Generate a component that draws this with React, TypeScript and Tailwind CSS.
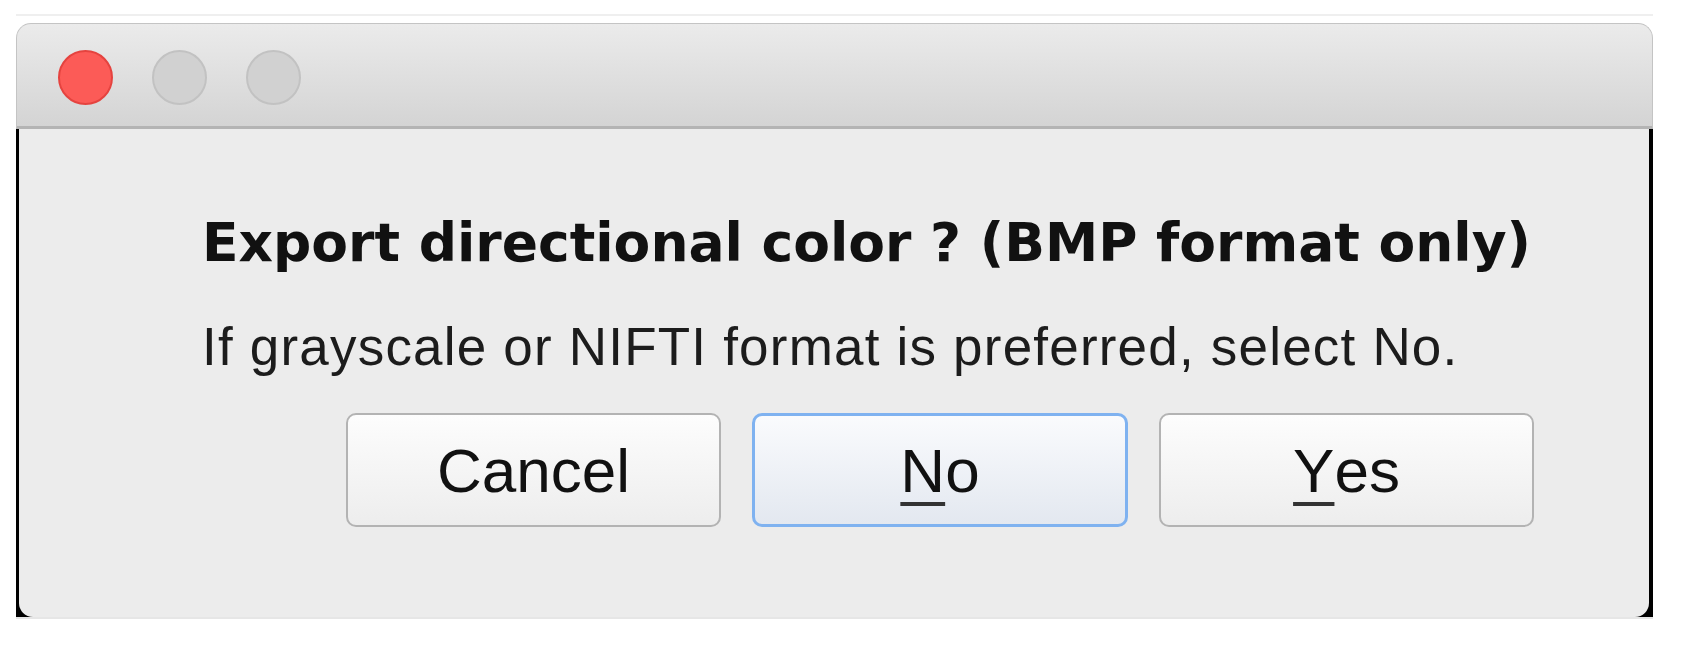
export default function App() {
  return (
    <div className="w-[1688px] h-[648px] bg-white pt-[14px]" style={{ fontFamily: '"Liberation Sans", Arial, sans-serif' }}>
      <div className="ml-[16px] w-[1637px] border-t-2 border-[#efefef] pt-[7px]">
        {/* title bar */}
        <div className="h-[106px] rounded-t-[15px] border border-b-[3px] border-[#c4c4c4] border-b-[#b4b4b4] bg-gradient-to-b from-[#ebebeb] to-[#d4d4d4] flex items-center gap-[39px] pl-[41px] pt-[4px]">
          <div className="w-[55px] h-[55px] rounded-full bg-[#fc5b57] border-2 border-[#e5433f]" />
          <div className="w-[55px] h-[55px] rounded-full bg-[#d1d1d1] border-2 border-[#c2c2c2]" />
          <div className="w-[55px] h-[55px] rounded-full bg-[#d1d1d1] border-2 border-[#c2c2c2]" />
        </div>
        {/* body */}
        <div className="bg-black pl-[3px] pr-[4px]">
          <div className="h-[488px] bg-[#ececec] rounded-b-[14px] pl-[183px] pr-[115px] pt-[82px] flex flex-col">
            <div className="text-[53.5px] leading-[64px] font-bold text-[#111] whitespace-nowrap" style={{ fontFamily: '"DejaVu Sans", sans-serif' }}>
              Export directional color ? (BMP format only)
            </div>
            <div className="mt-[42px] text-[53px] leading-[60px] text-[#1c1c1c] tracking-[1.2px] whitespace-nowrap">
              If grayscale or NIFTI format is preferred, select No.
            </div>
            <div className="mt-[36px] flex justify-end gap-[31px]">
              <button className="w-[375px] h-[114px] rounded-[10px] border-2 border-[#b3b3b3] bg-gradient-to-b from-[#fdfdfd] to-[#ededed] text-[62px] text-[#111] flex items-center justify-center">
                Cancel
              </button>
              <button className="w-[376px] h-[114px] rounded-[10px] border-[3px] border-[#7fb2f0] bg-gradient-to-b from-[#fafbfd] to-[#e3e8f0] text-[62px] text-[#111] flex items-center justify-center">
                <span className="underline decoration-[4px] underline-offset-[10px] decoration-[#333]">N</span>o
              </button>
              <button className="w-[375px] h-[114px] rounded-[10px] border-2 border-[#b3b3b3] bg-gradient-to-b from-[#fdfdfd] to-[#ededed] text-[62px] text-[#111] flex items-center justify-center">
                <span className="underline decoration-[4px] underline-offset-[10px] decoration-[#333]">Y</span>es
              </button>
            </div>
          </div>
        </div>
        <div className="h-[2px] bg-[#e6e6e6]" />
      </div>
    </div>
  );
}
